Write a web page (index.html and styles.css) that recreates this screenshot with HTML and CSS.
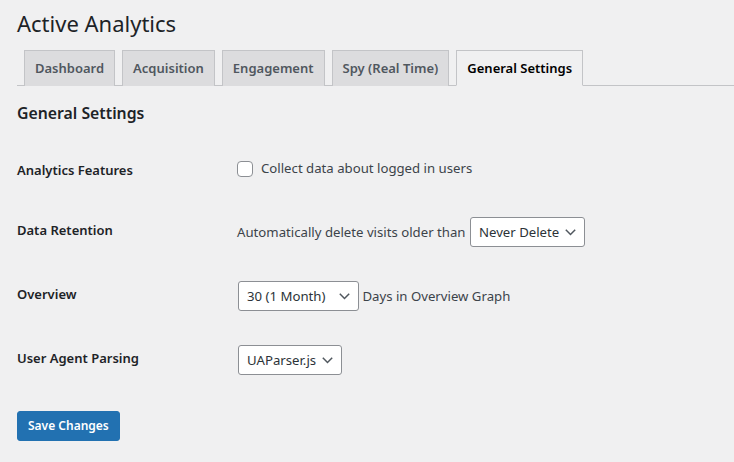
FILE: index.html
```html
<!DOCTYPE html>
<html lang="en">
<head>
<meta charset="utf-8">
<title>Active Analytics</title>
<link rel="stylesheet" href="styles.css">
</head>
<body>
<div class="wrap">
  <h1 class="page-title">Active Analytics</h1>
  <nav class="nav-tab-wrapper">
    <a class="nav-tab" href="#">Dashboard</a>
    <a class="nav-tab" href="#">Acquisition</a>
    <a class="nav-tab" href="#">Engagement</a>
    <a class="nav-tab" href="#">Spy (Real Time)</a>
    <a class="nav-tab nav-tab-active" href="#">General Settings</a>
  </nav>
  <h2 class="section-title">General Settings</h2>
  <form class="settings-form">
    <table class="form-table">
      <tr class="row-check">
        <th>Analytics Features</th>
        <td>
          <label class="check-label"><input type="checkbox" class="checkbox"><span>Collect data about logged in users</span></label>
        </td>
      </tr>
      <tr>
        <th>Data Retention</th>
        <td>
          <span class="inline-text">Automatically delete visits older than</span>
          <span class="select-wrap"><select class="select"><option>Never Delete</option></select><svg class="chev" viewBox="0 0 11 7" width="11" height="7"><path d="M0.8 0.8L5.5 5.5L10.2 0.8" fill="none" stroke="#50575e" stroke-width="1.5"/></svg></span>
        </td>
      </tr>
      <tr>
        <th>Overview</th>
        <td>
          <span class="select-wrap"><select class="select select-overview"><option>30 (1 Month)</option></select><svg class="chev" viewBox="0 0 11 7" width="11" height="7"><path d="M0.8 0.8L5.5 5.5L10.2 0.8" fill="none" stroke="#50575e" stroke-width="1.5"/></svg></span>
          <span class="inline-text">Days in Overview Graph</span>
        </td>
      </tr>
      <tr>
        <th>User Agent Parsing</th>
        <td>
          <span class="select-wrap"><select class="select"><option>UAParser.js</option></select><svg class="chev" viewBox="0 0 11 7" width="11" height="7"><path d="M0.8 0.8L5.5 5.5L10.2 0.8" fill="none" stroke="#50575e" stroke-width="1.5"/></svg></span>
        </td>
      </tr>
    </table>
    <p class="submit"><button type="button" class="button-primary">Save Changes</button></p>
  </form>
</div>
</body>
</html>
```

FILE: styles.css
```css
* { box-sizing: border-box; }
html, body { margin: 0; padding: 0; }
body {
  background: #f0f0f1;
  color: #3c434a;
  font-family: "Noto Sans", "Open Sans", sans-serif;
  font-size: 13.2px;
  line-height: 1.4;
  overflow: hidden;
}
.wrap { padding: 0 0 0 17px; }
.page-title {
  margin: 0;
  padding: 9px 0 3px;
  font-size: 22px;
  font-weight: 400;
  line-height: 1.3;
  color: #1d2327;
}
.nav-tab-wrapper {
  display: flex;
  border-bottom: 1px solid #c3c4c7;
  padding-top: 9px;
  margin: 0;
}
.nav-tab {
  margin-left: 7px;
  padding: 5px 10px;
  font-size: 13px;
  line-height: 24px;
  font-weight: 600;
  background: #dcdcde;
  color: #50575e;
  border: 1px solid #c3c4c7;
  border-bottom: none;
  text-decoration: none;
  margin-bottom: -1px;
}
.nav-tab-active {
  background: #f0f0f1;
  color: #000;
  border-bottom: 1px solid #f0f0f1;
}
.section-title {
  font-size: 15.8px;
  font-weight: 600;
  color: #1d2327;
  margin: 17px 0 0;
  line-height: 1.3;
}
.form-table {
  border-collapse: collapse;
  margin-top: 17px;
  width: 100%;
}
.form-table th {
  width: 220px;
  text-align: left;
  vertical-align: top;
  padding: 20px 10px 20px 0;
  font-weight: 600;
  color: #1d2327;
  font-size: 13px;
  line-height: 20px;
}
.form-table td {
  padding: 17px 10px 17px 0;
  vertical-align: middle;
  line-height: 20px;
  color: #3c434a;
}
.check-label { display: inline-flex; align-items: center; }
.checkbox {
  appearance: none;
  -webkit-appearance: none;
  width: 16px;
  height: 16px;
  margin: 2px 8px 0 0;
  border: 1px solid #8c8f94;
  border-radius: 4px;
  background: #fff;
}
.inline-text { vertical-align: middle; }
.select-wrap { position: relative; display: inline-block; vertical-align: middle; height: 30px; margin-left: 1px; }
.select {
  appearance: none;
  -webkit-appearance: none;
  font-family: inherit;
  font-size: 13.2px;
  color: #2c3338;
  background: #fff;
  border: 1px solid #8c8f94;
  border-radius: 3px;
  height: 30px;
  padding: 0 24px 0 8px;
  line-height: 28px;
  vertical-align: top;
}
.select-overview { width: 121px; }
.chev {
  position: absolute;
  right: 9px;
  top: 12px;
  pointer-events: none;
}
.submit { margin: 19px 0 0; padding: 0; }
.button-primary {
  font-family: inherit;
  background: #2271b1;
  color: #fff;
  border: 1px solid #2271b1;
  border-radius: 3px;
  font-size: 12px;
  font-weight: 600;
  height: 30px;
  padding: 0 10px;
  line-height: 28px;
}
```
